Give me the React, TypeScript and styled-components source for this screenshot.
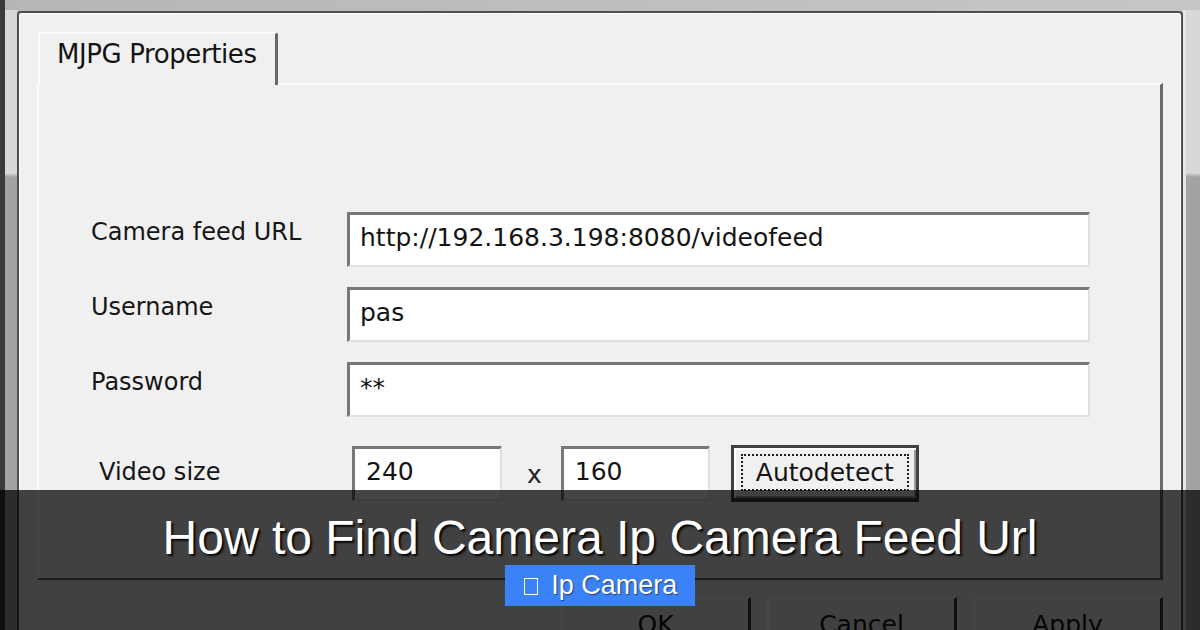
import React from 'react'
import styled, { createGlobalStyle } from 'styled-components'

const GlobalStyle = createGlobalStyle`
  html, body {
    margin: 0;
    padding: 0;
    background: #bdbdbd;
  }
`

const ui = `"DejaVu Sans", Verdana, sans-serif`

const Screen = styled.div`
  position: relative;
  width: 1200px;
  height: 630px;
  overflow: hidden;
  box-sizing: border-box;
  padding: 10px 0 0 5px;
  display: flex;
  background: linear-gradient(90deg, #b6b6b6, #c6c6c6);
  box-shadow: inset 5px 0 0 #3a3a3a;
`

const Rail = styled.div<{ side: 'left' | 'right' }>`
  flex: 0 0 auto;
  width: ${({ side }) => (side === 'left' ? '12px' : '14px')};
  border-left: ${({ side }) => (side === 'right' ? '3px solid #e6e6e6' : 'none')};
  background: linear-gradient(to bottom, #d8d8d8 0, #d8d8d8 163px, #a3a3a3 167px, #a3a3a3 100%);
`

const Dialog = styled.div`
  flex: 1;
  margin-top: 1px;
  display: flex;
  flex-direction: column;
  box-sizing: border-box;
  padding: 19px 18px 0 18px;
  background: #f0f0f0;
  border: 2px solid #4e4e4e;
  border-bottom: none;
  border-radius: 4px 4px 0 0;
  box-shadow: inset 1px 1px 0 #fff, inset -1px 0 0 #fff;
`

const TabStrip = styled.div`
  display: flex;
  height: 51px;
  flex-shrink: 0;
`

const Tab = styled.div`
  position: relative;
  z-index: 1;
  margin: 0 0 -2px 1px;
  width: 240px;
  box-sizing: border-box;
  padding: 5px 0 0 17px;
  background: #f0f0f0;
  border-top: 2px solid #fbfbfb;
  border-left: 2px solid #fbfbfb;
  border-right: 3px solid #686868;
  border-radius: 2px 3px 0 0;
  font-family: ${ui};
  font-size: 26px;
  line-height: 31px;
  color: #141414;
  letter-spacing: -0.4px;
  white-space: nowrap;
`

const Panel = styled.div`
  flex-shrink: 0;
  height: 497px;
  box-sizing: border-box;
  padding: 127px 70px 0 52px;
  border-top: 2px solid #fbfbfb;
  border-left: 2px solid #fbfbfb;
  border-right: 3px solid #686868;
  border-bottom: 2px solid #686868;
`

const FieldGrid = styled.div`
  display: grid;
  grid-template-columns: 256px 1fr;
  row-gap: 20px;
`

const Label = styled.div<{ indent?: number }>`
  padding: 6px 0 0 ${({ indent }) => indent ?? 0}px;
  font-family: ${ui};
  font-size: 24px;
  line-height: 29px;
  color: #161616;
`

const Field = styled.div<{ w?: number }>`
  box-sizing: border-box;
  width: ${({ w }) => (w ? `${w}px` : 'auto')};
  height: 55px;
  padding: 8px 0 0 ${({ w }) => (w ? 11 : 10)}px;
  background: #fff;
  border-style: solid;
  border-width: 3px 2px 2px 3px;
  border-color: #787878 #e0e0e0 #e0e0e0 #787878;
  font-family: ${ui};
  font-size: 25px;
  line-height: 30px;
  color: #141414;
  white-space: nowrap;
  overflow: hidden;
`

const SizeRow = styled.div`
  display: flex;
  align-items: flex-start;
  margin-top: 29px;
  padding-left: 8px;
`

const SizeLabel = styled(Label)`
  width: 253px;
  padding-top: 12px;
`

const Times = styled.span`
  padding: 14px 19px 0 25px;
  font-family: ${ui};
  font-size: 25px;
  line-height: 30px;
  color: #222;
`

const DetectButton = styled.div`
  margin: -1px 0 0 21px;
  width: 188px;
  height: 57px;
  box-sizing: border-box;
  padding: 6px 7px 7px 7px;
  background: #f0f0f0;
  border: 3px solid #404040;
  border-bottom-width: 4px;
  box-shadow: inset 2px 2px 0 #fff, inset -2px -2px 0 #9a9a9a;
  display: flex;
`

const FocusRing = styled.span`
  flex: 1;
  display: flex;
  align-items: center;
  justify-content: center;
  border: 2px dotted #1e1e1e;
  font-family: ${ui};
  font-size: 25px;
  line-height: 30px;
  color: #141414;
`

const ButtonRow = styled.div`
  display: flex;
  justify-content: flex-end;
  gap: 16px;
  margin-top: 17px;
  flex-shrink: 0;
`

const PushButton = styled.div`
  width: 190px;
  height: 56px;
  box-sizing: border-box;
  display: flex;
  align-items: center;
  justify-content: center;
  background: #f0f0f0;
  border-style: solid;
  border-width: 2px 3px 3px 2px;
  border-color: #fff #3a3a3a #3a3a3a #fff;
  font-family: ${ui};
  font-size: 25px;
  color: #141414;
`

const Banner = styled.div`
  position: absolute;
  left: 0;
  right: 0;
  top: 490px;
  bottom: 0;
  background: rgba(0, 0, 0, 0.73);
  display: flex;
  flex-direction: column;
  align-items: center;
  padding-top: 24px;
  box-sizing: border-box;
`

const Headline = styled.h1`
  margin: 0;
  font-family: "Liberation Sans", Arial, sans-serif;
  font-weight: 400;
  font-size: 48px;
  line-height: 48px;
  color: #fff;
  text-shadow: 2px 2px 2px rgba(0, 0, 0, 0.9);
  white-space: nowrap;
`

const Tag = styled.div`
  margin-top: 3px;
  height: 41px;
  box-sizing: border-box;
  padding: 0 18px 0 19px;
  background: #3b82f6;
  display: flex;
  align-items: center;
  font-family: "Liberation Sans", Arial, sans-serif;
  font-size: 27px;
  line-height: 41px;
  color: #fff;
  text-shadow: 1px 1px 1px rgba(0, 0, 0, 0.5);
  white-space: pre;
`

const Tofu = styled.span`
  display: inline-block;
  width: 14px;
  height: 17px;
  box-sizing: border-box;
  margin: 2px 6px 0 0;
  border: 1.5px solid #fff;
`

const fields = [
  { label: 'Camera feed URL', value: 'http://192.168.3.198:8080/videofeed' },
  { label: 'Username', value: 'pas' },
  { label: 'Password', value: '**' },
]

export default function App() {
  return (
    <>
      <GlobalStyle />
      <Screen>
        <Rail side="left" />
        <Dialog>
          <TabStrip>
            <Tab>MJPG Properties</Tab>
          </TabStrip>
          <Panel>
            <FieldGrid>
              {fields.map((f) => (
                <React.Fragment key={f.label}>
                  <Label>{f.label}</Label>
                  <Field>{f.value}</Field>
                </React.Fragment>
              ))}
            </FieldGrid>
            <SizeRow>
              <SizeLabel>Video size</SizeLabel>
              <Field w={150}>240</Field>
              <Times>x</Times>
              <Field w={149}>160</Field>
              <DetectButton>
                <FocusRing>Autodetect</FocusRing>
              </DetectButton>
            </SizeRow>
          </Panel>
          <ButtonRow>
            <PushButton>OK</PushButton>
            <PushButton>Cancel</PushButton>
            <PushButton>Apply</PushButton>
          </ButtonRow>
        </Dialog>
        <Rail side="right" />
        <Banner>
          <Headline>How to Find Camera Ip Camera Feed Url</Headline>
          <Tag>
            <Tofu />
            {' Ip Camera'}
          </Tag>
        </Banner>
      </Screen>
    </>
  )
}
